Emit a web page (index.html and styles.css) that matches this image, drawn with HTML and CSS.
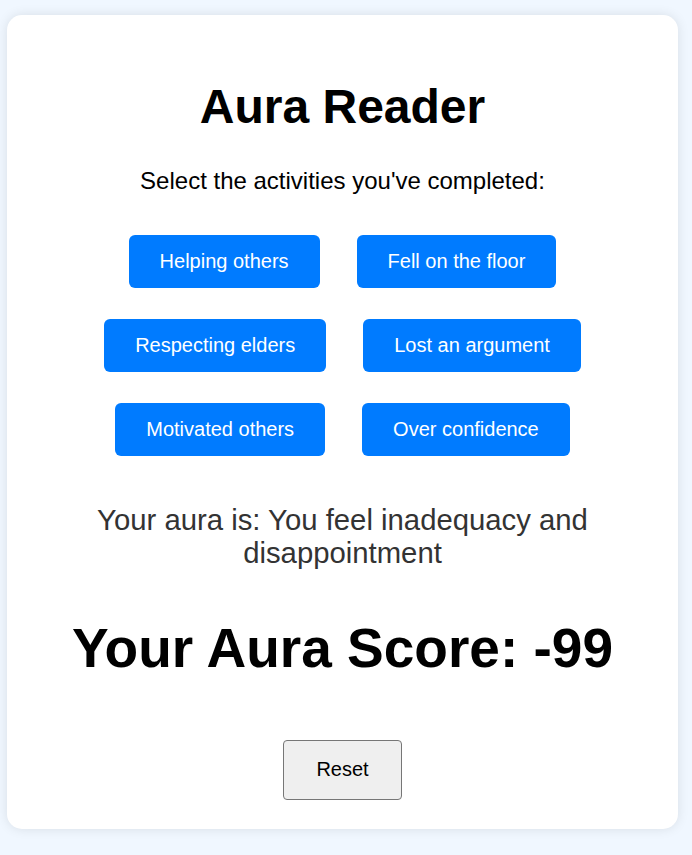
FILE: index.html
```html
<!DOCTYPE html>
<html lang="en">
<head>
<meta charset="utf-8">
<title>Aura Reader</title>
<link rel="stylesheet" href="styles.css">
</head>
<body>
<main class="card">
  <h1 class="title">Aura Reader</h1>
  <p class="prompt">Select the activities you've completed:</p>
  <div class="activities">
    <div class="row">
      <button class="activity">Helping others</button>
      <button class="activity">Fell on the floor</button>
    </div>
    <div class="row">
      <button class="activity">Respecting elders</button>
      <button class="activity">Lost an argument</button>
    </div>
    <div class="row">
      <button class="activity">Motivated others</button>
      <button class="activity">Over confidence</button>
    </div>
  </div>
  <p class="aura">Your aura is: You feel inadequacy and disappointment</p>
  <h2 class="score">Your Aura Score: -99</h2>
  <button class="reset">Reset</button>
</main>
</body>
</html>
```

FILE: styles.css
```css
html, body {
  margin: 0;
  padding: 0;
}
body {
  background: #f0f7ff;
  font-family: "Liberation Sans", Arial, sans-serif;
  padding: 15px 14px 26px 7px;
}
.card {
  background: #fff;
  border-radius: 15px;
  box-shadow: 0 0 12px rgba(0, 0, 0, 0.1);
  text-align: center;
  height: 814px;
  box-sizing: border-box;
  padding: 64px 20px 0;
  display: flex;
  flex-direction: column;
  align-items: center;
}
.title {
  margin: 0;
  font-size: 48px;
  font-weight: bold;
  color: #000;
  line-height: 55px;
}
.prompt {
  margin: 33px 0 0;
  font-size: 24px;
  color: #000;
  line-height: 28px;
}
.activities {
  margin-top: 40px;
  display: flex;
  flex-direction: column;
  gap: 31px;
}
.row {
  display: flex;
  justify-content: center;
  gap: 37px;
}
.activity {
  background: #007bff;
  color: #fff;
  border: none;
  border-radius: 6px;
  font-family: inherit;
  font-size: 20px;
  padding: 15px 31px;
  line-height: 23px;
}
.aura {
  margin: 47px 0 0;
  font-size: 29.3px;
  color: #333;
  max-width: 520px;
  line-height: 33px;
}
.score {
  margin: 48px 0 0;
  font-size: 55px;
  font-weight: bold;
  color: #000;
  line-height: 63px;
}
.reset {
  margin-top: 60px;
  background: #efefef;
  border: 1px solid #767676;
  border-radius: 4px;
  font-family: inherit;
  font-size: 20px;
  color: #000;
  padding: 17px 32px 18px;
  line-height: 23px;
}
```
